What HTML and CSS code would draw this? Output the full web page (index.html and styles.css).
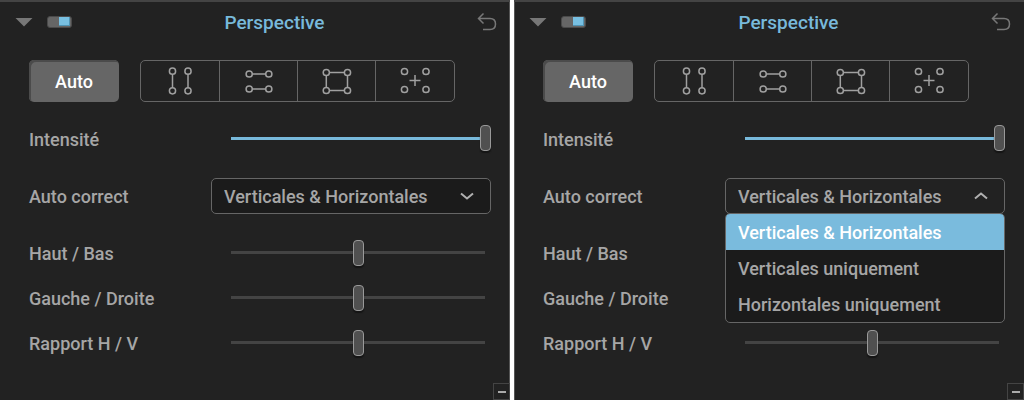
FILE: index.html
```html
<!DOCTYPE html>
<html lang="fr">
<head>
  <meta charset="UTF-8">
  <meta name="viewport" content="width=device-width, initial-scale=1.0">
  <title>Perspective</title>
  <link rel="stylesheet" href="styles.css">
</head>
<body>
  <svg class="sprite" aria-hidden="true">
    <symbol id="icon-reset" viewBox="0 0 20 20">
      <path d="M6.500 1.500L1.500 6.500L6.500 11.500M1.500 6.500H13Q18.500 6.500 18.500 12T13 17.500H6"/>
    </symbol>
    <symbol id="icon-verticals" viewBox="0 0 32 32">
      <path d="M8.500 9.500V22.500M24 9.500V22.500"/>
      <circle cx="8.500" cy="6.200" r="3.100"/><circle cx="24" cy="6.200" r="3.100"/>
      <circle cx="8.500" cy="25.800" r="3.100"/><circle cx="24" cy="25.800" r="3.100"/>
    </symbol>
    <symbol id="icon-horizontals" viewBox="0 0 32 32">
      <path d="M9.500 9H22.500M9.500 24H22.500"/>
      <circle cx="6.200" cy="9" r="3.100"/><circle cx="25.800" cy="9" r="3.100"/>
      <circle cx="6.200" cy="24" r="3.100"/><circle cx="25.800" cy="24" r="3.100"/>
    </symbol>
    <symbol id="icon-rectangle" viewBox="0 0 32 32">
      <path d="M8.500 7.500H23.500M8.500 25.500H23.500M5.300 11V22M26.500 11V22"/>
      <circle cx="5.300" cy="7.500" r="3.100"/><circle cx="26.500" cy="7.500" r="3.100"/>
      <circle cx="5.300" cy="25.500" r="3.100"/><circle cx="26.500" cy="25.500" r="3.100"/>
    </symbol>
    <symbol id="icon-points" viewBox="0 0 32 32">
      <path d="M16 10V21M10.500 15.500H21.500"/>
      <circle cx="5.500" cy="6.500" r="3.100"/><circle cx="27" cy="6.500" r="3.100"/>
      <circle cx="5.500" cy="24.500" r="3.100"/><circle cx="27" cy="24.500" r="3.100"/>
    </symbol>
    <symbol id="icon-down" viewBox="0 0 14 8">
      <path d="M1 1.500L7 6.500L13 1.500"/>
    </symbol>
    <symbol id="icon-up" viewBox="0 0 14 8">
      <path d="M1 6.500L7 1.500L13 6.500"/>
    </symbol>
  </svg>

  <main class="panels">
    <section class="panel">
      <header class="panel-header">
        <button class="collapse" aria-label="Replier"></button>
        <input class="toggle" type="checkbox" aria-label="Activer Perspective" checked>
        <h2>Perspective</h2>
        <button class="reset" aria-label="Réinitialiser"><svg><use href="#icon-reset"/></svg></button>
      </header>
      <div class="tools">
        <button class="auto">Auto</button>
        <div class="modes">
          <button aria-label="Verticales"><svg><use href="#icon-verticals"/></svg></button>
          <button aria-label="Horizontales"><svg><use href="#icon-horizontals"/></svg></button>
          <button aria-label="Rectangle"><svg><use href="#icon-rectangle"/></svg></button>
          <button aria-label="8 points"><svg><use href="#icon-points"/></svg></button>
        </div>
      </div>
      <div class="row intensity">
        <label for="intensity-1">Intensité</label>
        <input class="filled" type="range" id="intensity-1" value="100">
      </div>
      <div class="row">
        <label for="correct-1">Auto correct</label>
        <div class="dropdown">
          <select id="correct-1">
            <option>Verticales &amp; Horizontales</option>
            <option>Verticales uniquement</option>
            <option>Horizontales uniquement</option>
          </select>
          <svg class="chevron"><use href="#icon-down"/></svg>
        </div>
      </div>
      <div class="sliders">
        <div class="row">
          <label for="vertical-1">Haut / Bas</label>
          <input type="range" id="vertical-1">
        </div>
        <div class="row">
          <label for="horizontal-1">Gauche / Droite</label>
          <input type="range" id="horizontal-1">
        </div>
        <div class="row">
          <label for="ratio-1">Rapport H / V</label>
          <input type="range" id="ratio-1">
        </div>
      </div>
      <button class="minus" aria-label="Réduire"></button>
    </section>

    <section class="panel">
      <header class="panel-header">
        <button class="collapse" aria-label="Replier"></button>
        <input class="toggle" type="checkbox" aria-label="Activer Perspective" checked>
        <h2>Perspective</h2>
        <button class="reset" aria-label="Réinitialiser"><svg><use href="#icon-reset"/></svg></button>
      </header>
      <div class="tools">
        <button class="auto">Auto</button>
        <div class="modes">
          <button aria-label="Verticales"><svg><use href="#icon-verticals"/></svg></button>
          <button aria-label="Horizontales"><svg><use href="#icon-horizontals"/></svg></button>
          <button aria-label="Rectangle"><svg><use href="#icon-rectangle"/></svg></button>
          <button aria-label="8 points"><svg><use href="#icon-points"/></svg></button>
        </div>
      </div>
      <div class="row intensity">
        <label for="intensity-2">Intensité</label>
        <input class="filled" type="range" id="intensity-2" value="100">
      </div>
      <div class="row">
        <label for="correct-2">Auto correct</label>
        <div class="dropdown open">
          <select id="correct-2">
            <option>Verticales &amp; Horizontales</option>
            <option>Verticales uniquement</option>
            <option>Horizontales uniquement</option>
          </select>
          <svg class="chevron"><use href="#icon-up"/></svg>
          <ul class="menu" role="listbox" aria-label="Auto correct">
            <li class="selected" role="option" aria-selected="true">Verticales &amp; Horizontales</li>
            <li role="option" aria-selected="false">Verticales uniquement</li>
            <li role="option" aria-selected="false">Horizontales uniquement</li>
          </ul>
        </div>
      </div>
      <div class="sliders">
        <div class="row">
          <label for="vertical-2">Haut / Bas</label>
          <input type="range" id="vertical-2">
        </div>
        <div class="row">
          <label for="horizontal-2">Gauche / Droite</label>
          <input type="range" id="horizontal-2">
        </div>
        <div class="row">
          <label for="ratio-2">Rapport H / V</label>
          <input type="range" id="ratio-2">
        </div>
      </div>
      <button class="minus" aria-label="Réduire"></button>
    </section>
  </main>
</body>
</html>
```
FILE: styles.css
```css
* {
  box-sizing: border-box;
}

body {
  margin: 0;
  background: white;
  color: #a6a6a6;
  font-family: Roboto, sans-serif;
  font-size: 18px;
  font-weight: 500;
}

button,
select,
input {
  margin: 0;
  padding: 0;
  font: inherit;
  color: inherit;
  background: none;
  border: none;
}

svg {
  display: block;
  fill: none;
  stroke: #a0a0a0;
}

.sprite {
  position: absolute;
  width: 0;
  height: 0;
}

.panels {
  display: grid;
  grid-template-columns: 1fr 1fr;
  gap: 4px;
  min-height: 100vh;
}

.panel {
  display: flex;
  flex-direction: column;
  background: #222;
  border-top: 2px solid #444;
}

.panel:first-child {
  box-shadow: inset -1px 0 #555;
}

.panel:last-child {
  box-shadow: inset 1px 0 #555;
}

/* header */
.panel-header {
  display: flex;
  align-items: center;
  height: 40px;
  padding: 0 13px 0 15px;
}

.panel-header h2 {
  flex: 1;
  margin: 0;
  text-align: center;
  font-size: 19px;
  font-weight: 500;
  color: #78b9db;
}

.collapse {
  width: 18px;
  height: 9px;
  margin-right: 14px;
  background: #777;
  clip-path: polygon(0 0, 100% 0, 50% 100%);
}

.toggle {
  appearance: none;
  width: 25px;
  height: 12px;
  padding: 0 1px;
  background: #666;
  border: 1px solid #4a4a4a;
  border-radius: 3px;
}

.toggle::before {
  content: "";
  display: block;
  width: 11px;
  height: 9px;
  background: #78c0e2;
  box-shadow: inset -1px -1px #4f93b3;
}

.toggle:checked::before {
  margin-left: auto;
}

.reset svg {
  width: 20px;
  height: 20px;
  stroke: #777;
  stroke-width: 1.5;
}

/* auto button and modes */
.tools {
  display: flex;
  gap: 21px;
  height: 42px;
  margin: 18px 18px 0 29px;
}

.auto {
  width: 90px;
  background: #666;
  border-radius: 5px;
  box-shadow: inset 2px 2px #4b4b4b;
  color: white;
}

.modes {
  display: grid;
  grid-template-columns: 78px 78px 78px 79px;
  border: 1px solid #666;
  border-radius: 5px;
}

.modes button {
  display: flex;
  align-items: center;
  justify-content: center;
}

.modes button + button {
  border-left: 1px solid #666;
}

.modes svg {
  width: 32px;
  height: 32px;
  stroke-width: 1.5;
}

/* rows */
.row {
  display: grid;
  grid-template-columns: 182px 1fr;
  align-items: center;
  min-height: 36px;
  padding: 0 19px 0 29px;
}

.intensity {
  margin: 19px 0 21px;
}

.sliders {
  margin-top: 17px;
}

.sliders .row {
  height: 45px;
}

input[type="range"] {
  appearance: none;
  width: auto;
  height: 28px;
  margin: 0 0 2px 14px;
  background: linear-gradient(#444, #444) center / calc(100% - 12px) 3px no-repeat;
}

input[type="range"].filled {
  background-image: linear-gradient(#78b9db, #78b9db);
}

input[type="range"]::-webkit-slider-thumb {
  appearance: none;
  width: 11px;
  height: 26px;
  background: #505050;
  border: 1px solid #999;
  border-radius: 4px;
  box-shadow: 0 2px 1px #151515;
}

/* dropdown */
.dropdown {
  position: relative;
}

.dropdown select {
  appearance: none;
  display: block;
  width: 100%;
  height: 36px;
  padding: 0 12px;
  background: #1b1b1b;
  border: 1px solid #666;
  border-radius: 5px;
}

.dropdown.open select {
  background: #222;
}

.chevron {
  position: absolute;
  top: 14px;
  right: 17px;
  width: 14px;
  height: 8px;
  stroke: #b0b0b0;
  stroke-width: 2;
  pointer-events: none;
}

.menu {
  position: absolute;
  z-index: 1;
  top: 35px;
  left: 0;
  right: 0;
  margin: 0;
  padding: 0;
  list-style: none;
  overflow: hidden;
  background: #1b1b1b;
  border: 1px solid #666;
  border-radius: 5px;
}

.menu li {
  height: 36px;
  padding: 0 12px;
  line-height: 38px;
}

.menu .selected {
  background: #7abbdd;
  color: white;
}

.minus {
  display: flex;
  align-items: center;
  justify-content: center;
  align-self: flex-end;
  width: 17px;
  height: 17px;
  margin-top: auto;
  border: 1px solid #444;
}

.minus::before {
  content: "";
  width: 8px;
  height: 2px;
  background: #aaa;
}
```
